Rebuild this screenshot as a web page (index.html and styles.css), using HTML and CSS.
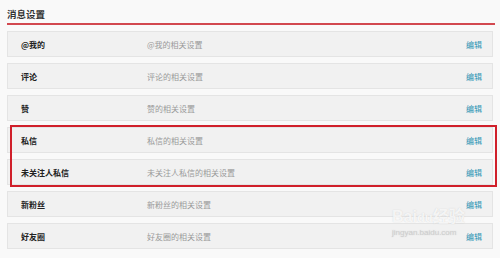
FILE: index.html
```html
<!DOCTYPE html>
<html lang="zh-CN">
<head>
<meta charset="utf-8">
<title>消息设置</title>
<link rel="stylesheet" href="styles.css">
</head>
<body>
<div class="page">
  <div class="title">消息设置</div>
  <div class="list">
    <div class="row"><span class="label">@我的</span><span class="desc">@我的相关设置</span><a class="edit">编辑</a></div>
    <div class="row"><span class="label">评论</span><span class="desc">评论的相关设置</span><a class="edit">编辑</a></div>
    <div class="row"><span class="label">赞</span><span class="desc">赞的相关设置</span><a class="edit">编辑</a></div>
    <div class="row"><span class="label">私信</span><span class="desc">私信的相关设置</span><a class="edit">编辑</a></div>
    <div class="row"><span class="label">未关注人私信</span><span class="desc">未关注人私信的相关设置</span><a class="edit">编辑</a></div>
    <div class="row"><span class="label">新粉丝</span><span class="desc">新粉丝的相关设置</span><a class="edit">编辑</a></div>
    <div class="row"><span class="label">好友圈</span><span class="desc">好友圈的相关设置</span><a class="edit">编辑</a></div>
  </div>
  <div class="highlight"></div>
  <div class="watermark">
    <div class="wm-logo">Bai<span class="wm-du">du</span>经验</div>
    <div class="wm-url">jingyan.baidu.com</div>
  </div>
</div>
</body>
</html>
```

FILE: styles.css
```css
html, body {
  margin: 0;
  padding: 0;
  background: #f9f9f9;
}
body {
  width: 500px;
  height: 258px;
  overflow: hidden;
  font-family: "Noto Sans CJK SC", "Liberation Sans", sans-serif;
}
.page {
  position: relative;
  padding: 0 5px 0 7px;
}
.title {
  height: 23px;
  line-height: 28px;
  font-size: 9.5px;
  font-weight: bold;
  color: #333;
  border-bottom: 2px solid #d2484f;
  box-sizing: content-box;
}
.list {
  display: flex;
  flex-direction: column;
  gap: 6px;
  padding-top: 6px;
  margin-right: 2px;
}
.row {
  display: grid;
  grid-template-columns: 126px 1fr auto;
  align-items: center;
  height: 26px;
  box-sizing: border-box;
  padding: 0 10px 0 13px;
  background: #f1f1f1;
  border: 1px solid #e4e4e4;
  font-size: 8px;
}
.label {
  font-weight: bold;
  color: #222;
}
.desc {
  color: #9a9a9a;
}
.edit {
  color: #2e93b3;
}
.highlight {
  position: absolute;
  left: 10px;
  top: 125px;
  width: 487px;
  height: 62px;
  box-sizing: border-box;
  border: 2px solid #d01f2a;
}
.watermark {
  position: absolute;
  left: 392px;
  top: 208px;
  color: rgba(255, 255, 255, 0.8);
  text-shadow: 0 0 1px rgba(170, 170, 170, 0.5);
  pointer-events: none;
}
.wm-logo {
  font-family: "Liberation Sans", "Noto Sans CJK SC", sans-serif;
  font-size: 16px;
  font-weight: bold;
  line-height: 18px;
}
.wm-du {
  font-size: 13px;
}
.wm-url {
  font-family: "Liberation Sans", sans-serif;
  font-size: 8px;
  line-height: 10px;
  margin-top: 1px;
  color: rgba(200, 200, 200, 0.6);
}
```
